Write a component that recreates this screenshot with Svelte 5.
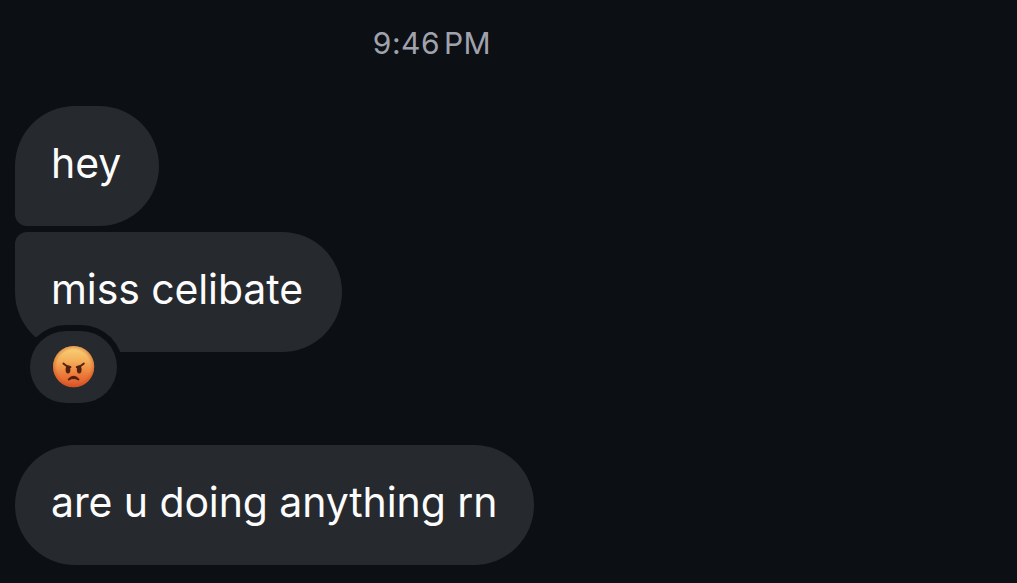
<script lang="ts">
    const time = '9:46 PM';
    const messages = [
        { text: 'hey', shape: 'first' },
        { text: 'miss celibate', shape: 'last', reaction: true },
        { text: 'are u doing anything rn', shape: 'single' },
    ];
</script>

<main class="chat">
    <time class="time">{time}</time>

    {#each messages as message}
        <div class="message {message.shape}">
            <div class="bubble"><span class="text">{message.text}</span></div>
            {#if message.reaction}
                <div class="reaction">
                    <svg class="emoji" viewBox="0 0 42 42" role="img" aria-label="angry">
                        <defs>
                            <linearGradient id="face" x1="0" y1="0" x2="0" y2="1">
                                <stop offset="0" stop-color="#f8d57a" />
                                <stop offset="0.35" stop-color="#f4b05a" />
                                <stop offset="0.7" stop-color="#ec7a39" />
                                <stop offset="1" stop-color="#de562a" />
                            </linearGradient>
                            <radialGradient id="edge">
                                <stop offset="0.8" stop-color="#c9481c" stop-opacity="0" />
                                <stop offset="1" stop-color="#c9481c" stop-opacity="0.45" />
                            </radialGradient>
                        </defs>
                        <circle cx="20.6" cy="20.6" r="20.6" fill="url(#face)" />
                        <circle cx="20.6" cy="20.6" r="20.6" fill="url(#edge)" />
                        <ellipse cx="15" cy="23.6" rx="2.4" ry="3.9" fill="#51200f" />
                        <ellipse cx="26.2" cy="23.6" rx="2.4" ry="3.9" fill="#51200f" />
                        <path d="M10.5 17.6Q12.8 20.2 17.4 21M30.7 17.6Q28.4 20.2 23.8 21" class="stroke" />
                        <path d="M15.8 33.4Q20.6 28.2 25.4 33.4Q20.6 30.8 15.8 33.4Z" class="stroke" />
                    </svg>
                </div>
            {/if}
        </div>
    {/each}
</main>

<style>
    :global(body) {
        margin: 0;
        background: #0c0f14;
        overflow: hidden;
    }

    .chat {
        box-sizing: border-box;
        width: 864px;
        height: 583px;
        padding: 26px 15px 0;
        display: flex;
        flex-direction: column;
        align-items: flex-start;

        color: #fcfcfd;
        font-family: Inter, "Liberation Sans", sans-serif;
    }

    .time {
        align-self: center;
        height: 36px;
        margin-bottom: 44px;

        color: #a0a3ae;
        font-size: 30px;
        line-height: 35px;
        letter-spacing: 0.5px;
        word-spacing: -5px;
        white-space: nowrap;
    }

    .message {
        position: relative;
        margin-bottom: 6px;
    }

    .bubble {
        box-sizing: border-box;
        height: 120px;
        padding: 0 36px;
        border-radius: 60px;
        background: #26292e;

        font-size: 41px;
        line-height: 114px;
        letter-spacing: -0.1px;
        white-space: nowrap;
    }

    .first .bubble {
        width: 144px;
        border-bottom-left-radius: 12px;
    }

    .last .bubble {
        width: 327px;
        border-top-left-radius: 12px;
    }

    .single .bubble {
        width: 519px;
    }

    .last {
        margin-bottom: 93px;
    }

    /* sits over the lower edge of the bubble, ring in the page colour */
    .reaction {
        position: absolute;
        left: 15px;
        top: 99px;
        width: 87px;
        height: 72px;
        border-radius: 36px;
        display: flex;
        align-items: center;
        justify-content: center;
        background: #26292e;
        box-shadow: 0 0 0 6px #0c0f14;
    }

    .emoji {
        width: 42px;
        height: 42px;
    }

    .stroke {
        fill: none;
        stroke: #51200f;
        stroke-width: 2;
        stroke-linecap: round;
        stroke-linejoin: round;
    }
</style>
